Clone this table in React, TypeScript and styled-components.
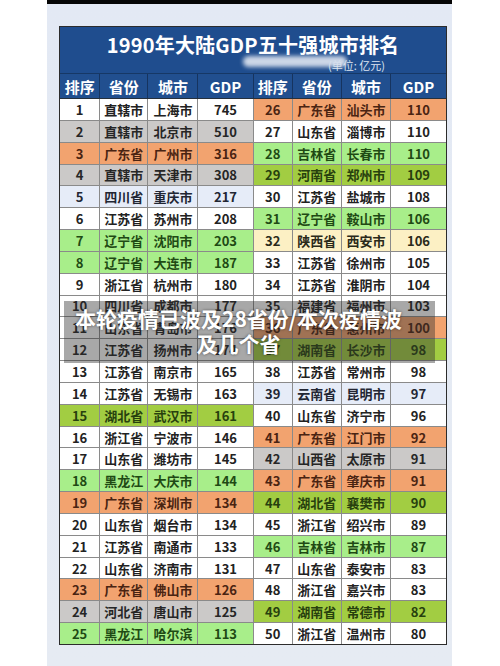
import React from "react";
import styled, { createGlobalStyle } from "styled-components";

const Global = createGlobalStyle`
  html, body { margin: 0; padding: 0; background: #ffffff; }
  body { font-family: "Noto Sans CJK SC", "Noto Sans", sans-serif; }
`;

type Tone = "white" | "gray" | "orange" | "green" | "olive" | "yellow" | "blue";

const bg: Record<Tone, string> = {
  white: "#ffffff",
  gray: "#cbc9c8",
  orange: "#f2a36f",
  green: "#a8ee8a",
  olive: "#a2cd42",
  yellow: "#fcf0c4",
  blue: "#e6ecf8",
};

const fg: Record<Tone, string> = {
  white: "#222222",
  gray: "#262626",
  orange: "#4a2412",
  green: "#1f4a14",
  olive: "#27400e",
  yellow: "#2a2a1a",
  blue: "#222633",
};

type Row = [string, string, string, string, Tone];

const left: Row[] = [
  ["1", "直辖市", "上海市", "745", "white"],
  ["2", "直辖市", "北京市", "510", "gray"],
  ["3", "广东省", "广州市", "316", "orange"],
  ["4", "直辖市", "天津市", "308", "gray"],
  ["5", "四川省", "重庆市", "217", "blue"],
  ["6", "江苏省", "苏州市", "208", "white"],
  ["7", "辽宁省", "沈阳市", "203", "green"],
  ["8", "辽宁省", "大连市", "187", "green"],
  ["9", "浙江省", "杭州市", "180", "white"],
  ["10", "四川省", "成都市", "177", "white"],
  ["11", "山东省", "青岛市", "176", "white"],
  ["12", "江苏省", "扬州市", "174", "white"],
  ["13", "江苏省", "南京市", "165", "white"],
  ["14", "江苏省", "无锡市", "163", "white"],
  ["15", "湖北省", "武汉市", "161", "olive"],
  ["16", "浙江省", "宁波市", "146", "white"],
  ["17", "山东省", "潍坊市", "145", "white"],
  ["18", "黑龙江", "大庆市", "144", "green"],
  ["19", "广东省", "深圳市", "134", "orange"],
  ["20", "山东省", "烟台市", "134", "white"],
  ["21", "江苏省", "南通市", "133", "white"],
  ["22", "山东省", "济南市", "131", "white"],
  ["23", "广东省", "佛山市", "126", "orange"],
  ["24", "河北省", "唐山市", "125", "gray"],
  ["25", "黑龙江", "哈尔滨", "113", "green"],
];

const right: Row[] = [
  ["26", "广东省", "汕头市", "110", "orange"],
  ["27", "山东省", "淄博市", "110", "white"],
  ["28", "吉林省", "长春市", "110", "green"],
  ["29", "河南省", "郑州市", "109", "olive"],
  ["30", "江苏省", "盐城市", "108", "white"],
  ["31", "辽宁省", "鞍山市", "106", "green"],
  ["32", "陕西省", "西安市", "106", "yellow"],
  ["33", "江苏省", "徐州市", "105", "white"],
  ["34", "江苏省", "淮阴市", "104", "white"],
  ["35", "福建省", "福州市", "103", "white"],
  ["36", "广东省", "惠州市", "100", "orange"],
  ["37", "湖南省", "长沙市", "98", "olive"],
  ["38", "江苏省", "常州市", "98", "white"],
  ["39", "云南省", "昆明市", "97", "blue"],
  ["40", "山东省", "济宁市", "96", "white"],
  ["41", "广东省", "江门市", "92", "orange"],
  ["42", "山西省", "太原市", "91", "gray"],
  ["43", "广东省", "肇庆市", "91", "orange"],
  ["44", "湖北省", "襄樊市", "90", "olive"],
  ["45", "浙江省", "绍兴市", "89", "white"],
  ["46", "吉林省", "吉林市", "87", "green"],
  ["47", "山东省", "泰安市", "83", "white"],
  ["48", "浙江省", "嘉兴市", "83", "white"],
  ["49", "湖南省", "常德市", "82", "olive"],
  ["50", "浙江省", "温州市", "80", "white"],
];

const COLS = "40fr 48fr 50fr 55fr 39fr 49fr 49fr 56fr";

const Page = styled.div`
  width: 500px;
  height: 666px;
  overflow: hidden;
  display: flex;
  padding-left: 47px;
  box-sizing: border-box;
`;

const Photo = styled.div`
  position: relative;
  width: 405px;
  height: 666px;
  background: linear-gradient(180deg, #e3e9f4 0%, #e6ebf3 100%);
  display: flex;
  flex-direction: column;
`;

const TopBar = styled.div`
  height: 4px;
  background: #050505;
`;

const TableWrap = styled.div`
  padding: 22px 5px 0 12px;
`;

const Table = styled.div`
  width: 388px;
  box-sizing: border-box;
  border: 1px solid #2c2c2c;
  display: flex;
  flex-direction: column;
`;

const TitleBlock = styled.div`
  position: relative;
  height: 47px;
  background: #1f4d8e;
  display: flex;
  flex-direction: column;
  align-items: center;
  border-bottom: 1px solid #163866;
  box-sizing: border-box;
`;

const Title = styled.div`
  margin-top: 6px;
  color: #ffffff;
  font-size: 20px;
  font-weight: 700;
  line-height: 24px;
  letter-spacing: 0.2px;
`;

const Unit = styled.div`
  align-self: flex-end;
  margin-right: 61px;
  margin-top: 1px;
  color: #dfe6f2;
  font-size: 11px;
  line-height: 14px;
`;

const Smudge = styled.div`
  position: absolute;
  left: 183px;
  top: 29px;
  width: 104px;
  height: 11px;
  border-radius: 6px;
  background: rgba(214, 222, 236, 0.95);
  filter: blur(2px);
`;

const HeadGrid = styled.div`
  display: grid;
  grid-template-columns: ${COLS};
  gap: 1px;
  height: 24px;
  background: #16345f;
  border-bottom: 1px solid #26303c;
`;

const HeadCell = styled.div`
  background: #214f8f;
  color: #ffffff;
  font-size: 15px;
  font-weight: 700;
  display: flex;
  align-items: center;
  justify-content: center;
`;

const BodyGrid = styled.div`
  display: grid;
  grid-template-columns: ${COLS};
  grid-template-rows: repeat(25, 1fr);
  gap: 1px;
  height: 545px;
  background: #8a8a8a;
`;

const Cell = styled.div<{ $tone: Tone }>`
  background: ${(p) => bg[p.$tone]};
  color: ${(p) => fg[p.$tone]};
  font-size: 13px;
  font-weight: 700;
  display: flex;
  align-items: center;
  justify-content: center;
  white-space: nowrap;
`;

const Caption = styled.div`
  position: absolute;
  left: 17px;
  top: 301px;
  width: 371px;
  height: 62px;
  box-sizing: border-box;
  padding: 5px 24px 0 2px;
  background: rgba(48, 48, 48, 0.42);
  color: #ffffff;
  font-size: 21px;
  font-weight: 700;
  line-height: 25px;
  text-align: center;
  text-shadow: 0 0 3px rgba(0, 0, 0, 0.55);
  white-space: nowrap;
`;

const headers = ["排序", "省份", "城市", "GDP", "排序", "省份", "城市", "GDP"];

export default function App() {
  return (
    <>
      <Global />
      <Page>
        <Photo>
          <TopBar />
          <TableWrap>
            <Table>
              <TitleBlock>
                <Title>1990年大陆GDP五十强城市排名</Title>
                <Unit>(单位: 亿元)</Unit>
                <Smudge />
              </TitleBlock>
              <HeadGrid>
                {headers.map((h, i) => (
                  <HeadCell key={i}>{h}</HeadCell>
                ))}
              </HeadGrid>
              <BodyGrid>
                {left.map((l, i) => {
                  const r = right[i];
                  return (
                    <React.Fragment key={i}>
                      {l.slice(0, 4).map((v, j) => (
                        <Cell key={"l" + j} $tone={l[4]}>{v}</Cell>
                      ))}
                      {r.slice(0, 4).map((v, j) => (
                        <Cell key={"r" + j} $tone={r[4]}>{v}</Cell>
                      ))}
                    </React.Fragment>
                  );
                })}
              </BodyGrid>
            </Table>
          </TableWrap>
          <Caption>
            本轮疫情已波及28省份/本次疫情波
            <br />
            及几个省
          </Caption>
        </Photo>
      </Page>
    </>
  );
}
